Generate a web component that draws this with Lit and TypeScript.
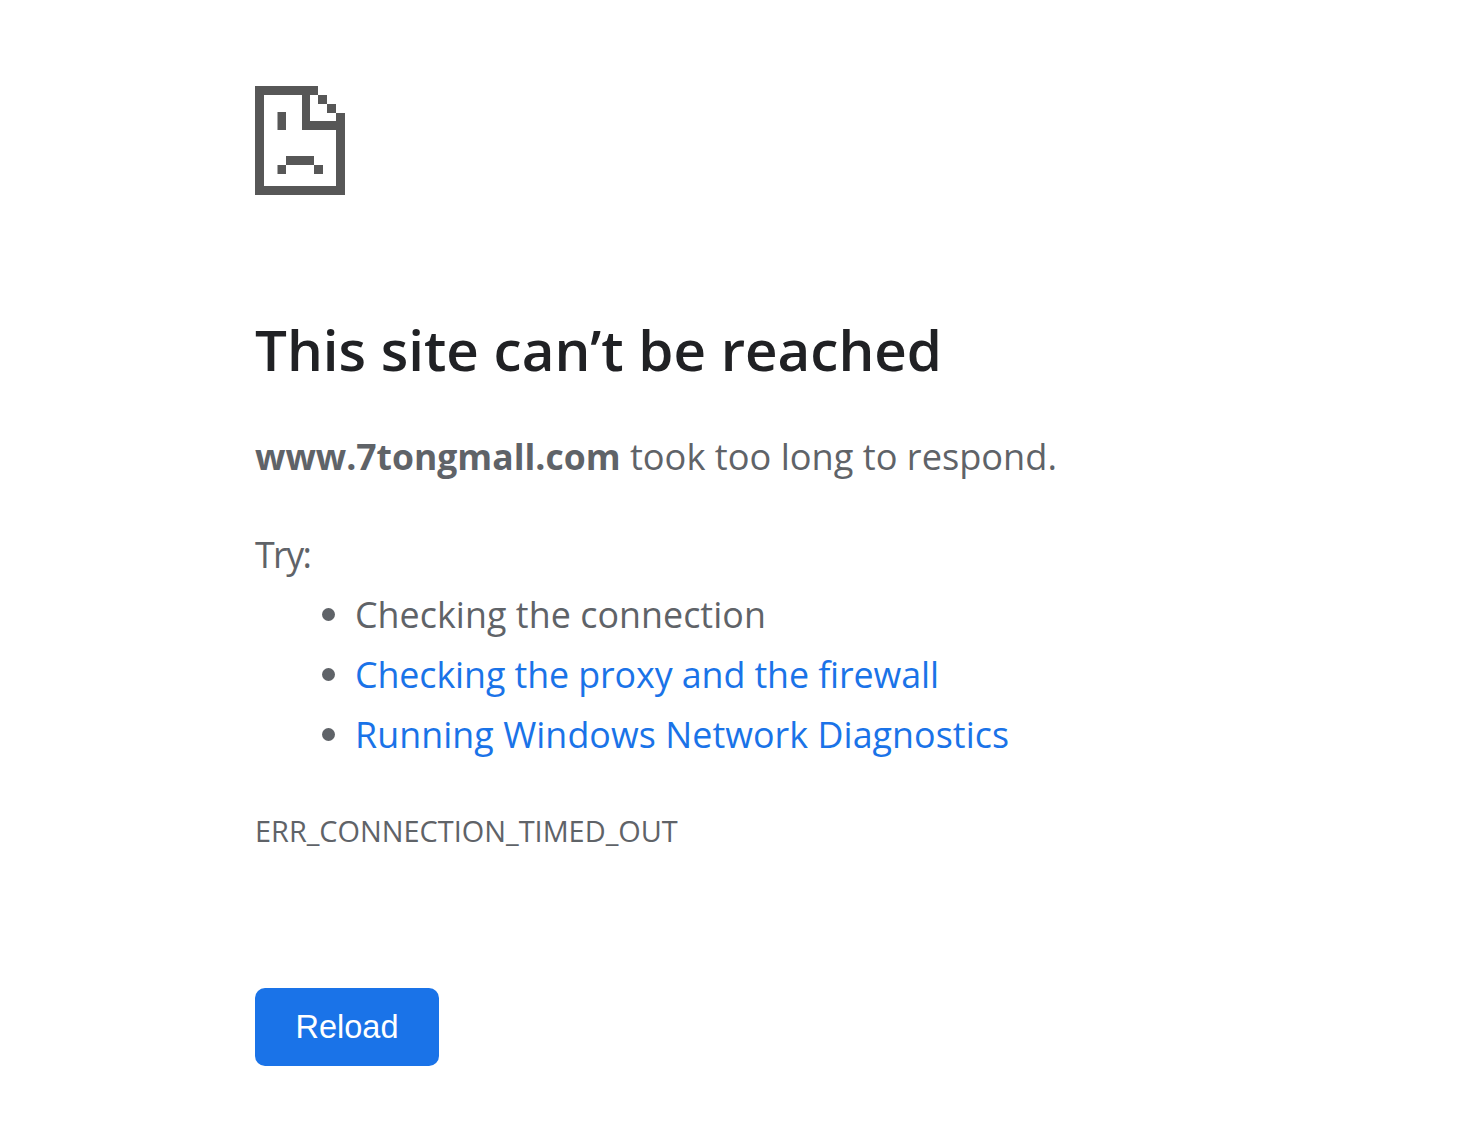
import { css, html, LitElement } from 'lit';
import { customElement } from 'lit/decorators.js';

@customElement('app-root')
export class AppRoot extends LitElement {
  static styles = css`
    :host {
      display: block;
      height: 1128px;
      box-sizing: border-box;
      padding: 86px 0 0 255px;
      background: #fff;
      color: #5f6368;
      font-family: 'Open Sans', 'Noto Sans', sans-serif;
      font-size: 35.8px;
    }

    .icon {
      display: block;
      width: 90px;
      height: 109px;
      fill: #575757;
    }

    h1 {
      margin: 117px 0 0;
      color: #202124;
      font-size: 56.5px;
      font-weight: 600;
      line-height: 76px;
    }

    p {
      margin: 0;
    }

    .summary {
      margin-top: 38px;
      font-size: 36.2px;
      line-height: 60px;
    }

    .summary strong {
      font-size: 35.5px;
    }

    .try {
      margin-top: 38px;
      letter-spacing: -1.6px;
      line-height: 60px;
    }

    ul {
      margin: 0;
      padding: 0 0 0 67px;
      list-style: none;
      line-height: 60px;
    }

    li {
      display: flex;
      align-items: center;
      gap: 20px;
      letter-spacing: 0.06px;
    }

    li:nth-child(2) {
      letter-spacing: -0.09px;
    }

    li::before {
      content: '';
      width: 13px;
      height: 13px;
      border-radius: 50%;
      background: #5f6368;
    }

    a {
      color: #1a73e8;
      text-decoration: none;
    }

    .code {
      margin-top: 37px;
      font-size: 28.9px;
      line-height: 60px;
    }

    button {
      display: block;
      width: 184px;
      height: 78px;
      margin-top: 127px;
      padding: 0;
      border: 0;
      border-radius: 10px;
      background: #1a73e8;
      color: #fff;
      font-family: 'Liberation Sans', Arial, sans-serif;
      font-size: 32.5px;
    }
  `;

  render() {
    return html`
      <svg class="icon" viewBox="0 0 90 109">
        <path
          d="M0 0h63v9H55v26h26v-8h9v82H0zM9 9v91h72V44H47V9zM63 9h9v9h-9zM72 18h9v9h-9zM22.500 26H31v18h-8.500zM31 70h28v9H31zM22.500 79H31v9h-8.500zM59 79h9v9h-9z"
          fill-rule="evenodd"
        />
      </svg>
      <h1>This site can’t be reached</h1>
      <p class="summary"><strong>www.7tongmall.com</strong> took too long to respond.</p>
      <p class="try">Try:</p>
      <ul>
        <li>Checking the connection</li>
        <li><a href="#">Checking the proxy and the firewall</a></li>
        <li><a href="#">Running Windows Network Diagnostics</a></li>
      </ul>
      <p class="code">ERR_CONNECTION_TIMED_OUT</p>
      <button>Reload</button>
    `;
  }
}
